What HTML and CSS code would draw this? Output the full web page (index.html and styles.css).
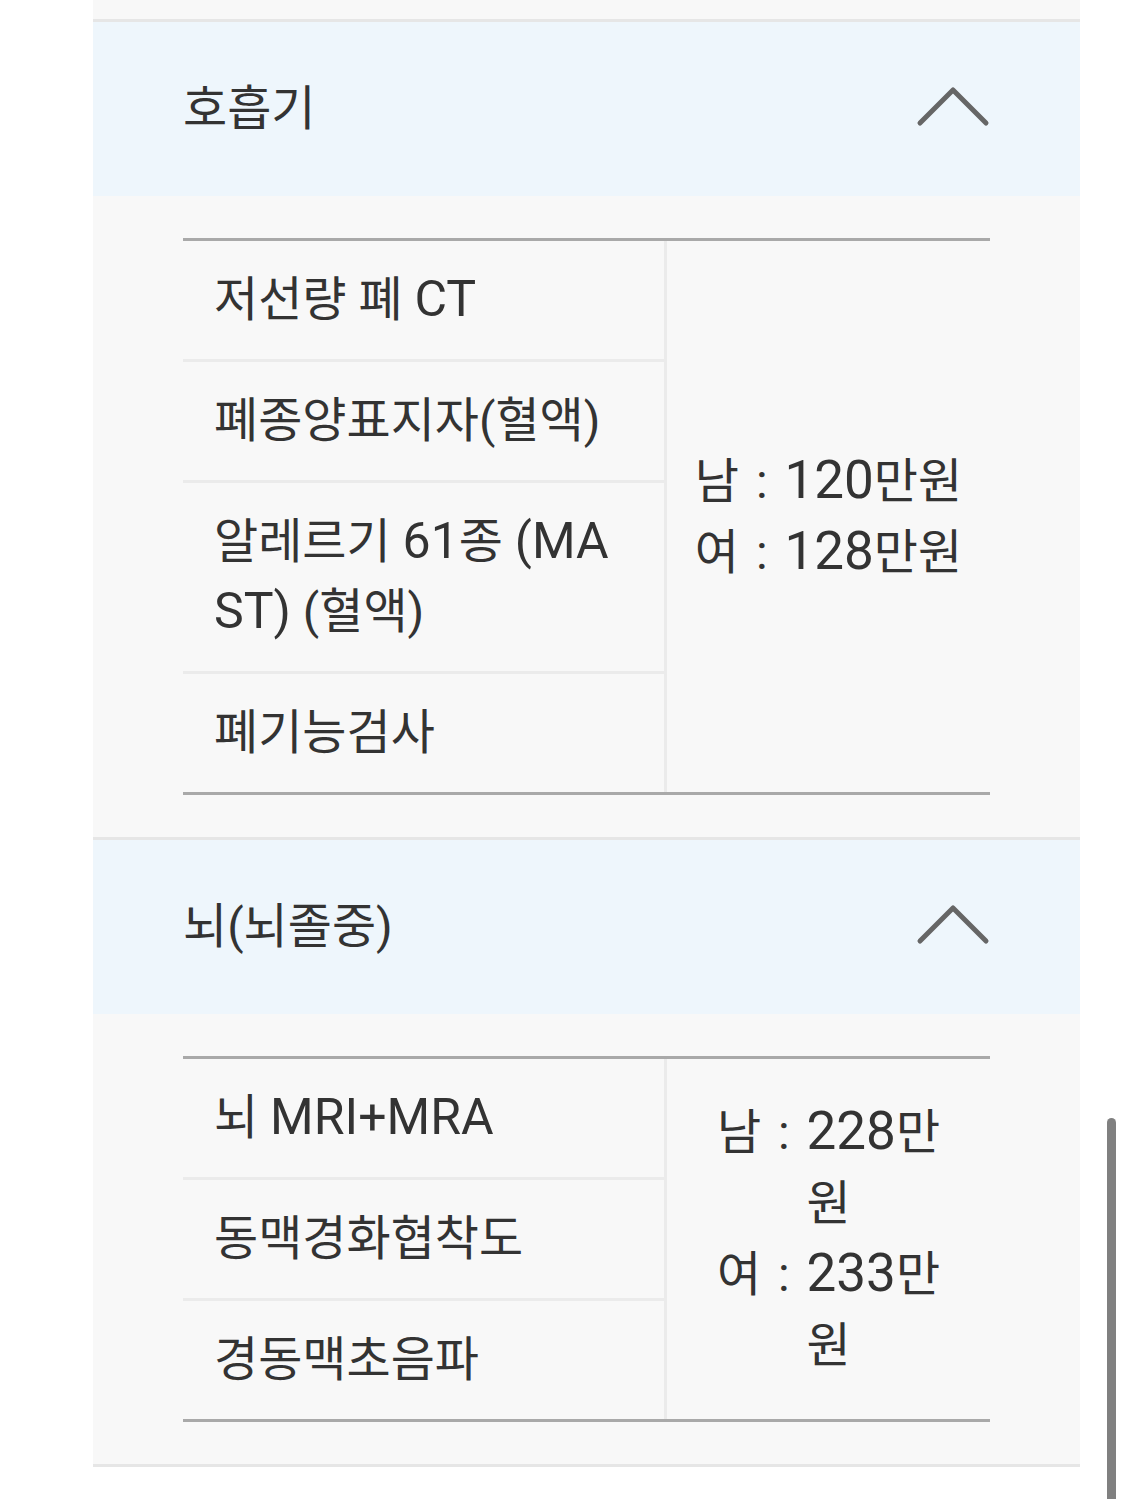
FILE: index.html
```html
<!DOCTYPE html>
<html lang="ko">
<head>
<meta charset="utf-8">
<title>검진 항목</title>
<link rel="stylesheet" href="styles.css">
</head>
<body>
<div class="acc">
  <div class="prev-tail"></div>

  <section class="sec">
    <div class="sec-head">
      <span class="sec-title">호흡기</span>
      <svg class="chev" width="74" height="42" viewBox="0 0 74 42"><path d="M4 37 L37 4 L70 37" fill="none" stroke="#666" stroke-width="5" stroke-linecap="round" stroke-linejoin="round"/></svg>
    </div>
    <div class="sec-body">
      <div class="tbl">
        <div class="items">
          <div class="item">저선량 폐 <span class="lt">CT</span></div>
          <div class="item">폐종양표지자(혈액)</div>
          <div class="item">알레르기 <span class="lt">61</span>종 <span class="lt">(MA</span><br><span class="lt">ST)</span> (혈액)</div>
          <div class="item">폐기능검사</div>
        </div>
        <div class="price">
          <div class="pl">남 : <span class="num">120</span>만원</div>
          <div class="pl">여 : <span class="num">128</span>만원</div>
        </div>
      </div>
    </div>
  </section>

  <section class="sec">
    <div class="sec-head">
      <span class="sec-title">뇌(뇌졸중)</span>
      <svg class="chev" width="74" height="42" viewBox="0 0 74 42"><path d="M4 37 L37 4 L70 37" fill="none" stroke="#666" stroke-width="5" stroke-linecap="round" stroke-linejoin="round"/></svg>
    </div>
    <div class="sec-body">
      <div class="tbl">
        <div class="items">
          <div class="item">뇌 <span class="lt">MRI+MRA</span></div>
          <div class="item">동맥경화협착도</div>
          <div class="item">경동맥초음파</div>
        </div>
        <div class="price">
          <div class="pl">남 : <span class="num">228</span>만<br>원</div>
          <div class="pl">여 : <span class="num">233</span>만<br>원</div>
        </div>
      </div>
    </div>
  </section>
</div>
<div class="scrollbar"></div>
</body>
</html>
```
FILE: styles.css
```css
html, body {
  margin: 0;
  padding: 0;
  background: #ffffff;
}
body {
  font-family: Roboto, "Noto Sans CJK KR", sans-serif;
  font-size: 48px;
  color: #333333;
}
.acc {
  margin-left: 93px;
  width: 987px;
  border-bottom: 3px solid #e6e6e6;
}
.prev-tail {
  height: 19px;
  background: #f8f8f8;
}
.sec {
  border-top: 3px solid #e6e6e6;
}
.sec-head {
  height: 174px;
  background: #eef6fc;
  padding: 0 90px;
  display: flex;
  align-items: center;
  justify-content: space-between;
}
.sec-title {
  line-height: 70px;
}
.chev {
  display: block;
  margin-top: -4px;
}
.sec-body {
  background: #f8f8f8;
  padding: 42px 90px;
}
.tbl {
  display: grid;
  grid-template-columns: 484px 1fr;
  border-top: 3px solid #a9a9a9;
  border-bottom: 3px solid #a9a9a9;
}
.items {
  border-right: 3px solid #ebebeb;
}
.item {
  padding: 24px 10px 24px 31px;
  line-height: 70px;
  white-space: nowrap;
}
.item + .item {
  border-top: 3px solid #ebebeb;
}
.lt {
  font-size: 50px;
  line-height: 1;
}
.num {
  font-size: 53px;
  line-height: 1;
}
.price {
  display: flex;
  flex-direction: column;
  justify-content: center;
  align-items: center;
  text-align: center;
  line-height: 71px;
}
.pl {
  white-space: nowrap;
  word-spacing: 5px;
}
.scrollbar {
  position: fixed;
  left: 1107px;
  top: 1118px;
  width: 9px;
  height: 400px;
  background: #808080;
  border-radius: 5px;
}
```
